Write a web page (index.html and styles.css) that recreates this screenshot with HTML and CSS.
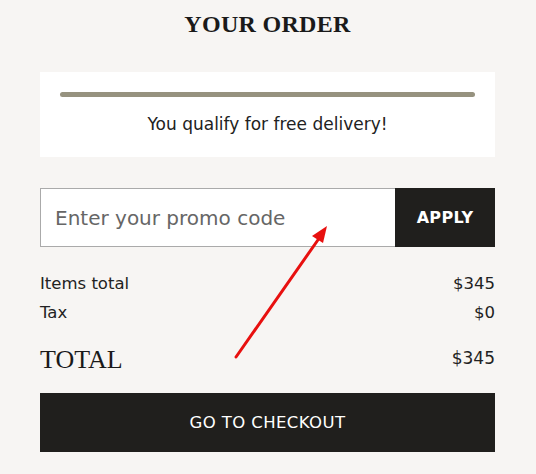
FILE: index.html
```html
<!DOCTYPE html>
<html>
<head>
<meta charset="utf-8">
<link rel="stylesheet" href="styles.css">
</head>
<body>
<div class="order">
  <h1 class="title">YOUR ORDER</h1>
  <div class="delivery">
    <div class="progress"></div>
    <p class="delivery-text">You qualify for free delivery!</p>
  </div>
  <form class="promo">
    <input class="promo-input" type="text" placeholder="Enter your promo code">
    <button class="promo-btn" type="button">APPLY</button>
  </form>
  <div class="lines">
    <div class="line"><span>Items total</span><span>$345</span></div>
    <div class="line"><span>Tax</span><span>$0</span></div>
  </div>
  <div class="total"><span class="total-label">TOTAL</span><span class="total-value">$345</span></div>
  <button class="checkout" type="button">GO TO CHECKOUT</button>
  <svg class="arrow" width="536" height="474" viewBox="0 0 536 474">
    <line x1="236" y1="357" x2="320" y2="237" stroke="#e8100f" stroke-width="3" stroke-linecap="round"/>
    <polygon points="327,226 312,236 323,243" fill="#e8100f"/>
  </svg>
</div>
</body>
</html>
```
FILE: styles.css
```css
* { box-sizing: border-box; }
html, body { margin: 0; padding: 0; }
body {
  background: #f7f5f3;
  font-family: "DejaVu Sans", "Noto Sans", sans-serif;
  color: #222;
  width: 536px;
  height: 474px;
  overflow: hidden;
}
.order {
  padding: 0 41px 0 40px;
  position: relative;
}
.title {
  margin: 0;
  padding-top: 11px;
  height: 72px;
  text-align: center;
  font-family: "Liberation Serif", serif;
  font-size: 24px;
  font-weight: bold;
  letter-spacing: 0.3px;
  color: #1a1a1a;
}
.delivery {
  background: #fff;
  height: 85px;
  padding: 20px 20px 0;
}
.progress {
  height: 5px;
  border-radius: 3px;
  background: #96927f;
}
.delivery-text {
  margin: 17px 0 0;
  text-align: center;
  font-size: 17px;
  color: #222;
}
.promo {
  display: flex;
  margin: 31px 0 0;
  height: 59px;
}
.promo-input {
  flex: 1;
  border: 1px solid #aaa;
  border-right: none;
  background: #fff;
  padding: 0 14px;
  font-family: inherit;
  font-size: 20px;
  color: #222;
  outline: none;
}
.promo-input::placeholder { color: #666; }
.promo-btn {
  width: 100px;
  border: none;
  background: #201f1d;
  color: #fff;
  font-family: inherit;
  font-size: 16px;
  font-weight: bold;
  letter-spacing: 0.3px;
}
.lines { margin-top: 22px; }
.line {
  display: flex;
  justify-content: space-between;
  font-size: 16.5px;
  line-height: 29px;
}
.total {
  display: flex;
  justify-content: space-between;
  align-items: center;
  margin-top: 14px;
  height: 37px;
}
.total-label {
  font-family: "Liberation Serif", serif;
  font-size: 26px;
  color: #1a1a1a;
}
.total-value {
  font-size: 17px;
  margin-bottom: 4px;
}
.checkout {
  display: block;
  width: 100%;
  height: 59px;
  margin-top: 15px;
  border: none;
  background: #201f1d;
  color: #fff;
  font-family: inherit;
  font-size: 16.5px;
  letter-spacing: 0.4px;
}
.arrow {
  position: absolute;
  left: 0;
  top: 0;
  pointer-events: none;
}
```
